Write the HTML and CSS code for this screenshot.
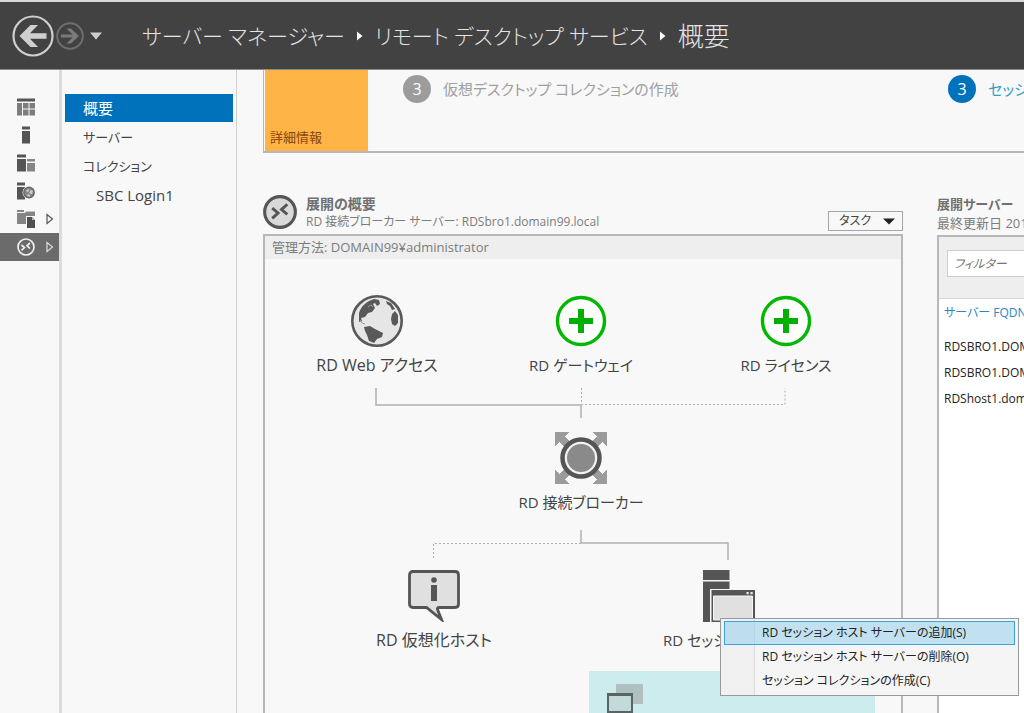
FILE: index.html
```html
<!DOCTYPE html>
<html lang="ja">
<head>
<meta charset="utf-8">
<title>サーバー マネージャー</title>
<link rel="stylesheet" href="styles.css">
</head>
<body>
<header class="topbar">
  <div class="history">
    <button class="round-btn" aria-label="戻る">
      <svg width="42" height="42" viewBox="0 0 42 42"><circle cx="21" cy="21" r="19.5" fill="none" stroke="#cfcfcf" stroke-width="2.2"/><path d="M7.500 21L18.500 10h7.500l-8 8.200h16.500v5.600H18l8 8.200h-7.500z" fill="#cfcfcf"/></svg>
    </button>
    <button class="round-btn" aria-label="進む">
      <svg width="28" height="28" viewBox="0 0 28 28"><circle cx="14" cy="14" r="12.800" fill="none" stroke="#6e6e6e" stroke-width="2"/><path d="M23 14l-8 7.500h-4.500l6-6H5v-3h11.500l-6-6H15z" fill="#7a7a7a"/></svg>
    </button>
    <button class="round-btn history-menu" aria-label="履歴">
      <svg width="12" height="8" viewBox="0 0 12 8"><path d="M0 0.500h12L6 7.500z" fill="#cfcfcf"/></svg>
    </button>
  </div>
  <nav class="crumbs" aria-label="パンくず">
    <a href="#">サーバー マネージャー</a>
    <svg width="6" height="10" viewBox="0 0 6 10"><path d="M0 0.500l5.500 4.500L0 9.500z" fill="#fff"/></svg>
    <a href="#">リモート デスクトップ サービス</a>
    <svg width="6" height="10" viewBox="0 0 6 10"><path d="M0 0.500l5.500 4.500L0 9.500z" fill="#fff"/></svg>
    <span class="crumb-current">概要</span>
  </nav>
</header>

<div class="workspace">
  <nav class="rail" aria-label="サーバー マネージャー">
    <a class="rail-item" href="#" aria-label="ダッシュボード">
      <svg width="18" height="18" viewBox="0 0 18 18"><path d="M0 0.500h18v3H0z" fill="#555"/><path d="M0 5h5v12.500H0zM6 5h5.500v5.500H6zM12.500 5H18v5.500h-5.500zM6 11.500h5.500v6H6zM12.500 11.500H18v6h-5.500z" fill="#7d7d7d"/></svg>
    </a>
    <a class="rail-item" href="#" aria-label="ローカル サーバー">
      <svg width="18" height="18" viewBox="0 0 18 18"><path d="M5 0.500h8v3H5zM5 5h8v12.500H5z" fill="#555"/></svg>
    </a>
    <a class="rail-item" href="#" aria-label="すべてのサーバー">
      <svg width="18" height="18" viewBox="0 0 18 18"><path d="M0 0.500h9v3H0zM0 5h9v12.500H0z" fill="#555"/><path d="M10 5h8v2.500h-8zM10 9h8v8.500h-8z" fill="#858585"/></svg>
    </a>
    <a class="rail-item" href="#" aria-label="DNS">
      <svg width="18" height="18" viewBox="0 0 18 18"><path d="M0 0.500h8v3H0zM0 5h8v12.500H0z" fill="#555"/><circle cx="12" cy="10.500" r="6.500" fill="#f7f7f7"/><circle cx="12" cy="10.500" r="5.200" fill="#8a8a8a" stroke="#666" stroke-width="1.400"/><path d="M9 9l2-2 1 1-1 2zM12 11l2-3 2 1-1 3zM10 13l2-1 1 2-1 1z" fill="#d0d0d0"/></svg>
    </a>
    <a class="rail-item" href="#" aria-label="ファイル サービスと記憶域サービス">
      <svg width="18" height="18" viewBox="0 0 18 18"><path d="M0 0h7v2H0zM0 3h8l1-1.500h9V14H0z" fill="#858585"/><path d="M9 6h9v12H9z" fill="#f7f7f7"/><path d="M10 7h5l3 3v8h-8z" fill="#505050"/><path d="M15 7v3h3z" fill="#bbb"/></svg>
      <svg class="expander" width="8" height="12" viewBox="0 0 8 12"><path d="M1 1.500v9L6.500 6z" fill="none" stroke="#555" stroke-width="1.200"/></svg>
    </a>
    <a class="rail-item rail-item-active" href="#" aria-label="リモート デスクトップ サービス">
      <svg width="18" height="18" viewBox="0 0 18 18"><circle cx="9" cy="9" r="8" fill="none" stroke="#eee" stroke-width="1.700"/><path d="M4.500 7l3 2.600-3 2.800M13 5l-3 2.700 3 2.800" fill="none" stroke="#eee" stroke-width="1.700"/></svg>
      <svg class="expander" width="8" height="12" viewBox="0 0 8 12"><path d="M1 1.500v9L6.500 6z" fill="none" stroke="#ddd" stroke-width="1.200"/></svg>
    </a>
  </nav>

  <nav class="sidenav" aria-label="リモート デスクトップ サービス">
    <a class="side-link side-link-active" href="#">概要</a>
    <a class="side-link" href="#">サーバー</a>
    <a class="side-link" href="#">コレクション</a>
    <a class="side-link side-link-sub" href="#">SBC Login1</a>
  </nav>

  <main class="content">
    <section class="quickstart">
      <a class="tile" href="#">詳細情報</a>
      <ol class="steps">
        <li class="step"><span class="badge">3</span><span>仮想デスクトップ コレクションの作成</span></li>
        <li class="step step-blue"><span class="badge">3</span><a href="#">セッション コレクションの作成</a></li>
      </ol>
    </section>

    <div class="columns">
      <section class="overview">
        <div class="head">
          <svg width="34" height="36" viewBox="0 0 35 35"><circle cx="17.500" cy="17.500" r="15.800" fill="#d9d9d9" stroke="#555" stroke-width="3.200"/><path d="M9.500 13.500l6 5-6 5.500M25 9.500l-6 5.500 6 5" fill="none" stroke="#555" stroke-width="3"/></svg>
          <div class="head-text">
            <h2>展開の概要</h2>
            <p>RD 接続ブローカー サーバー: RDSbro1.domain99.local</p>
          </div>
          <button class="tasks" aria-haspopup="menu">タスク
            <svg width="12" height="7" viewBox="0 0 12 7"><path d="M0 0.500h12L6 6.500z" fill="#222"/></svg>
          </button>
        </div>
        <div class="panel">
          <p class="strip">管理方法: DOMAIN99¥administrator</p>
          <div class="diagram">
            <svg class="wires" width="636" height="310" viewBox="0 0 636 310">
              <g fill="none" stroke="#b0b0b0">
                <path stroke-width="1.500" d="M111 129v17h205v13M316 271v13h147v17"/>
                <path stroke-dasharray="2 2" d="M316.500 129v16.500h203.500v-16.500M316 284.500H168.500v16.500"/>
              </g>
            </svg>
            <div class="node node-web">
              <svg width="52" height="52" viewBox="0 0 52 52"><circle cx="26" cy="26" r="24.700" fill="#e6e6e6" stroke="#595959" stroke-width="2.600"/><path d="M8 18c2-7 8-12 15-14l5 1 1 4-3 2-2-3-2 1 2 4-3 4-4 1-3 4-4 1 1 3-3 1zM13 32l6-1 5 3 8 4-1 4-5 2-3 4-5-2-2-6-2-4zM41 19l3-3 3 4v8l-3 3-3-2-1-5zM35 6l5 2 4 6-3 1-2-4-3-2z" fill="#595959"/><path d="M9 25l2 3 3 1M17 12l3-2 2 2" fill="none" stroke="#999"/></svg>
              <span>RD Web アクセス</span>
            </div>
            <div class="node node-compact node-gateway">
              <svg width="52" height="52" viewBox="0 0 52 52"><circle cx="26" cy="26" r="23.500" fill="#fff" stroke="#00b800" stroke-width="3.400"/><path d="M23 14h6v9h9v6h-9v9h-6v-9h-9v-6h9z" fill="#00b000"/></svg>
              <span>RD ゲートウェイ</span>
            </div>
            <div class="node node-compact node-license">
              <svg width="52" height="52" viewBox="0 0 52 52"><circle cx="26" cy="26" r="23.500" fill="#fff" stroke="#00b800" stroke-width="3.400"/><path d="M23 14h6v9h9v6h-9v9h-6v-9h-9v-6h9z" fill="#00b000"/></svg>
              <span>RD ライセンス</span>
            </div>
            <div class="node node-compact node-broker">
              <svg width="52" height="52" viewBox="0 0 52 52"><path d="M0 0h14l-4.500 4.500L20 15 15 20 4.500 9.500 0 14zM52 0v14l-4.500-4.500L37 20l-5-5L42.500 4.500 38 0zM0 52V38l4.500 4.500L15 32l5 5L9.500 47.500 14 52zM52 52H38l4.500-4.500L32 37l5-5 10.500 10.500L52 38z" fill="#9b9b9b" stroke="#9b9b9b" stroke-width="1"/><circle cx="26" cy="26" r="18.500" fill="#f2f2f2" stroke="#555" stroke-width="4.500"/><circle cx="26" cy="26" r="14" fill="#8a8a8a"/></svg>
              <span>RD 接続ブローカー</span>
            </div>
            <div class="node node-virtual">
              <svg width="52" height="52" viewBox="0 0 52 52"><path d="M5 1.500h42q3.500 0 3.500 3.500v29q0 3.500-3.500 3.500H31q-2 0-1.500 2l4 10-15-12H5q-3.500 0-3.500-3.500V5Q1.500 1.500 5 1.500z" fill="#e0e0e0" stroke="#555" stroke-width="2.800"/><circle cx="26" cy="10" r="2.800" fill="#555"/><path d="M23 15h6v16h-6z" fill="#555"/></svg>
              <span>RD 仮想化ホスト</span>
            </div>
            <div class="node node-compact node-session">
              <svg width="52" height="52" viewBox="0 0 52 52"><path d="M0 0h26.500v10H0zM0 11.500h26.500V19H7v33H0z" fill="#555"/><path d="M8.500 20H52v32H8.500z" fill="#555"/><path d="M10.500 26h39v24h-39z" fill="#e0e0e0" stroke="#f7f7f7"/><path d="M43.500 22h2.200v2.200h-2.200zM47.500 22h2.200v2.200h-2.200z" fill="#eee"/></svg>
              <span>RD セッション ホスト</span>
            </div>
            <div class="collection">
              <svg width="36" height="30" viewBox="0 0 36 30"><path d="M9 0h27v20H9z" fill="#b0bfbf"/><path d="M0 9h26v20H0z" fill="#596565"/><path d="M2 12h22v15H2z" fill="#c2dada"/></svg>
            </div>
            <div class="menu" role="menu">
              <button class="menu-item menu-item-active" role="menuitem">RD セッション ホスト サーバーの追加(S)</button>
              <button class="menu-item" role="menuitem">RD セッション ホスト サーバーの削除(O)</button>
              <button class="menu-item" role="menuitem">セッション コレクションの作成(C)</button>
            </div>
          </div>
        </div>
      </section>

      <section class="servers">
        <div class="head">
          <div class="head-text">
            <h2>展開サーバー</h2>
            <p class="updated">最終更新日 2017</p>
          </div>
        </div>
        <div class="panel panel-list">
          <div class="filterbar"><input class="filter" type="text" placeholder="フィルター" aria-label="フィルター"></div>
          <table class="list">
            <thead><tr><th scope="col">サーバー FQDN</th></tr></thead>
            <tbody>
              <tr><td>RDSBRO1.DOMAIN99.LOCAL</td></tr>
              <tr><td>RDSBRO1.DOMAIN99.LOCAL</td></tr>
              <tr><td>RDShost1.domain99.local</td></tr>
            </tbody>
          </table>
        </div>
      </section>
    </div>
  </main>
</div>
</body>
</html>
```

FILE: styles.css
```css
* { box-sizing: border-box; }

body {
  margin: 0;
  height: 100vh;
  display: flex;
  flex-direction: column;
  overflow: hidden;
  background: #f8f8f8;
  color: #444;
  font: 13px/20px "Open Sans", "Noto Sans CJK JP", sans-serif;
  font-feature-settings: "palt";
  white-space: nowrap;
}

h2, p, ol { margin: 0; padding: 0; font-weight: normal; }
a { color: inherit; text-decoration: none; }
button, input { font: inherit; font-feature-settings: inherit; color: inherit; }
svg { display: block; flex: none; }

/* Top bar */
.topbar {
  flex: none;
  display: flex;
  align-items: center;
  height: 70px;
  padding-left: 12px;
  background: #424242;
  border-top: 2px solid #d8d8d8;
  border-bottom: 1px solid #8a8a8a;
}
.history { display: flex; align-items: center; gap: 2px; width: 130px; }
.round-btn { padding: 0; border: 0; background: none; }
.history-menu { margin-left: 4px; }
.crumbs {
  display: flex;
  align-items: center;
  gap: 12px;
  color: #e4e4e4;
  font-size: 21px;
  font-weight: 300;
  line-height: 32px;
}
.crumb-current { font-size: 26px; }

.workspace { flex: 1; display: flex; min-height: 0; }

/* Icon rail */
.rail {
  flex: none;
  width: 62px;
  padding-top: 23px;
  border-right: 3px solid #dcdcdc;
}
.rail-item {
  display: flex;
  align-items: center;
  gap: 11px;
  height: 28px;
  padding-left: 17px;
}
.rail-item-active { background: #6b6b6b; }

/* Section navigation */
.sidenav {
  flex: none;
  display: flex;
  flex-direction: column;
  gap: 1px;
  width: 175px;
  padding: 24px 3px 0;
  border-right: 1px solid #d0d0d0;
}
.side-link { height: 28px; padding-left: 18px; line-height: 28px; }
.side-link-active { background: #0072bc; color: #fff; font-size: 15px; }
.side-link-sub { padding-left: 31px; font-size: 15px; }

/* Content */
.content { flex: 1; min-width: 0; display: flex; flex-direction: column; padding-left: 26px; }

.quickstart {
  flex: none;
  display: flex;
  height: 83px;
  overflow: hidden;
  border: solid #b8b8b8;
  border-width: 0 0 2px 1px;
}
.tile {
  flex: none;
  display: flex;
  align-items: flex-end;
  width: 103px;
  margin: 0 35px 0 1px;
  padding: 0 5px 4px;
  background: #ffb445;
  color: #8a4510;
}
.steps { flex: none; display: flex; list-style: none; padding-top: 5px; color: #a0a0a0; font-size: 15px; }
.step { display: flex; gap: 12px; width: 545px; line-height: 28px; }
.step-blue { color: #2f9fc9; }
.badge {
  width: 28px;
  height: 28px;
  border-radius: 50%;
  background: #9c9c9c;
  color: #fff;
  font-size: 16px;
  text-align: center;
}
.step-blue .badge { background: #0072bc; }

.columns {
  flex: 1;
  display: grid;
  grid-template-columns: minmax(0, 640px) minmax(0, 1fr);
  gap: 34px;
  min-height: 0;
  padding-top: 41px;
}
.overview, .servers { display: flex; flex-direction: column; min-height: 0; }
.head { flex: none; display: flex; height: 40px; gap: 9px; color: #7c7c7c; }
.head-text { flex: 1; min-width: 0; font-size: 12px; line-height: 18px; }
.head h2 { font-size: 14px; line-height: 19px; font-weight: 600; color: #707070; }
.tasks {
  display: flex;
  align-items: center;
  justify-content: space-between;
  width: 75px;
  height: 20px;
  margin-top: 17px;
  padding: 0 7px 0 10px;
  border: 1px solid #a6a6a6;
  background: #f8f8f8;
  color: #444;
  font-size: 12px;
}

.panel { flex: 1; display: flex; flex-direction: column; border: 2px solid #b8b8b8; border-bottom: 0; }
.strip { flex: none; height: 23px; padding-left: 7px; background: #eee; color: #7c7c7c; line-height: 22px; }

/* Deployment diagram */
.diagram { position: relative; flex: 1; font-size: 16px; }
.wires { position: absolute; left: 0; top: 0; }
.node {
  position: absolute;
  display: flex;
  flex-direction: column;
  align-items: center;
  gap: 8px;
  width: 160px;
}
.node-compact { font-size: 15px; }
.node-web { left: 32px; top: 36px; }
.node-gateway { left: 236px; top: 36px; }
.node-license { left: 441px; top: 36px; }
.node-broker { left: 236px; top: 173px; }
.node-virtual { left: 89px; top: 311px; }
.node-session { left: 384px; top: 311px; }
.collection {
  position: absolute;
  left: 324px;
  top: 412px;
  right: 26px;
  height: 60px;
  padding: 13px 18px;
  background: #cdeced;
}

/* Context menu */
.menu {
  position: absolute;
  left: 455px;
  top: 359px;
  z-index: 1;
  width: 299px;
  padding: 2px 3px;
  border: 1px solid #999;
  background: linear-gradient(90deg, #f0f0f0 33px, #dcdcdc 33px, #dcdcdc 34px, #f5f5f5 34px);
  color: #222;
  font-size: 12px;
}
.menu-item {
  display: block;
  width: 100%;
  height: 24px;
  padding: 0 0 0 37px;
  border: 1px solid transparent;
  background: none;
  line-height: 20px;
  text-align: left;
}
.menu-item-active { border-color: #3aa5dc; background: rgba(150, 208, 235, .55); }

/* Server list */
.panel-list { border-right: 0; background: #fff; min-width: 0; overflow: hidden; }
.servers .head { margin-top: 1px; }
.servers h2, .servers .updated { font-size: 13px; }
.filterbar { flex: none; height: 62px; padding: 13px 0 0 8px; background: #eee; border-bottom: 1px solid #d4d4d4; }
.filter {
  width: 240px;
  height: 27px;
  padding: 0 6px;
  border: 1px solid #ccc;
  background: #fff;
  font-size: 12px;
  font-style: italic;
}
.filter::placeholder { color: #777; opacity: 1; }
.list { border-collapse: collapse; color: #222; font-size: 12px; }
.list th { height: 35px; padding: 0 5px 8px; color: #2a86c8; font-weight: normal; text-align: left; }
.list td { height: 26px; padding: 0 5px; }
```
